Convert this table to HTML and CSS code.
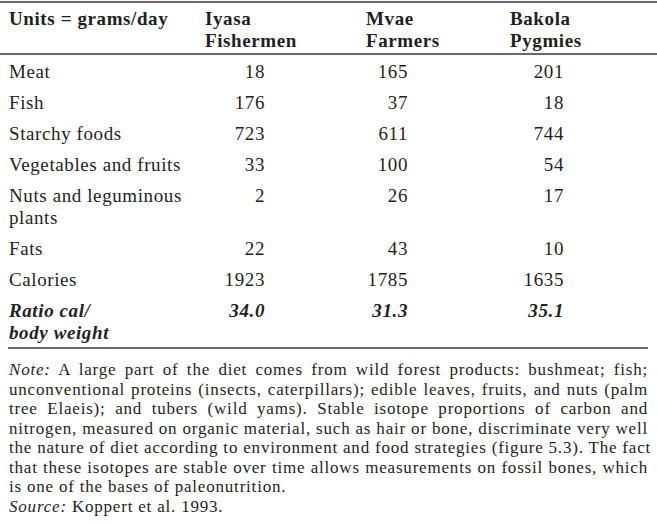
FILE: index.html
```html
<!DOCTYPE html>
<html lang="en">
<head>
<meta charset="utf-8">
<title>Diet table</title>
<link rel="stylesheet" href="styles.css">
</head>
<body>
<div class="table">
  <div class="row head">
    <div class="cell label">Units = grams/day</div>
    <div class="cell h c2">Iyasa<br>Fishermen</div>
    <div class="cell h c3">Mvae<br>Farmers</div>
    <div class="cell h c4">Bakola<br>Pygmies</div>
  </div>
  <div class="body">
    <div class="row">
      <div class="cell label">Meat</div>
      <div class="cell num c2">18</div>
      <div class="cell num c3">165</div>
      <div class="cell num c4">201</div>
    </div>
    <div class="row">
      <div class="cell label">Fish</div>
      <div class="cell num c2">176</div>
      <div class="cell num c3">37</div>
      <div class="cell num c4">18</div>
    </div>
    <div class="row">
      <div class="cell label">Starchy foods</div>
      <div class="cell num c2">723</div>
      <div class="cell num c3">611</div>
      <div class="cell num c4">744</div>
    </div>
    <div class="row">
      <div class="cell label">Vegetables and fruits</div>
      <div class="cell num c2">33</div>
      <div class="cell num c3">100</div>
      <div class="cell num c4">54</div>
    </div>
    <div class="row">
      <div class="cell label">Nuts and leguminous<br>plants</div>
      <div class="cell num c2">2</div>
      <div class="cell num c3">26</div>
      <div class="cell num c4">17</div>
    </div>
    <div class="row">
      <div class="cell label">Fats</div>
      <div class="cell num c2">22</div>
      <div class="cell num c3">43</div>
      <div class="cell num c4">10</div>
    </div>
    <div class="row">
      <div class="cell label">Calories</div>
      <div class="cell num c2">1923</div>
      <div class="cell num c3">1785</div>
      <div class="cell num c4">1635</div>
    </div>
    <div class="row ratio">
      <div class="cell label">Ratio cal/<br>body weight</div>
      <div class="cell num c2">34.0</div>
      <div class="cell num c3">31.3</div>
      <div class="cell num c4">35.1</div>
    </div>
  </div>
</div>
<div class="note">
  <div class="just"><em>Note:</em> A large part of the diet comes from wild forest products: bushmeat; fish;<br>unconventional proteins (insects, caterpillars); edible leaves, fruits, and nuts (palm<br>tree Elaeis); and tubers (wild yams). Stable isotope proportions of carbon and<br>nitrogen, measured on organic material, such as hair or bone, discriminate very well<br>the nature of diet according to environment and food strategies (figure 5.3). The fact<br>that these isotopes are stable over time allows measurements on fossil bones, which</div>
  <div>is one of the bases of paleonutrition.</div>
  <div><em>Source:</em> Koppert et al. 1993.</div>
</div>
</body>
</html>
```
FILE: styles.css
```css
html, body {
  margin: 0;
  padding: 0;
  background: #ffffff;
}
body {
  width: 657px;
  height: 524px;
  overflow: hidden;
  font-family: "Liberation Serif", "Times New Roman", serif;
  color: #231f20;
  padding-top: 1px;
  box-sizing: border-box;
}
.table {
  border-top: 2px solid #6a6a6a;
}
.row {
  display: grid;
  grid-template-columns: 205px 161px 144px 147px;
  font-size: 19px;
  letter-spacing: 0.6px;
  line-height: 22px;
  padding: 5px 0 4px;
}
.row.head {
  font-weight: bold;
  padding: 5px 0 1px;
  border-bottom: 2px solid #6a6a6a;
}
.body {
  padding-top: 1px;
}
.cell.label {
  padding-left: 9px;
}
.num {
  text-align: right;
}
.num.c2 { padding-right: 101px; }
.num.c3 { padding-right: 102px; }
.num.c4 { padding-right: 93px; }
.ratio {
  font-style: italic;
  font-weight: bold;
  padding-bottom: 3px;
}
.note {
  margin: 0 9px 0 8px;
  border-top: 2px solid #6a6a6a;
  padding-top: 11px;
  font-size: 17px;
  letter-spacing: 0.8px;
  line-height: 19.5px;
  padding-left: 1px;
}
.note .just {
  text-align: justify;
  text-align-last: justify;
  white-space: nowrap;
}
.note em {
  font-style: italic;
}
```
